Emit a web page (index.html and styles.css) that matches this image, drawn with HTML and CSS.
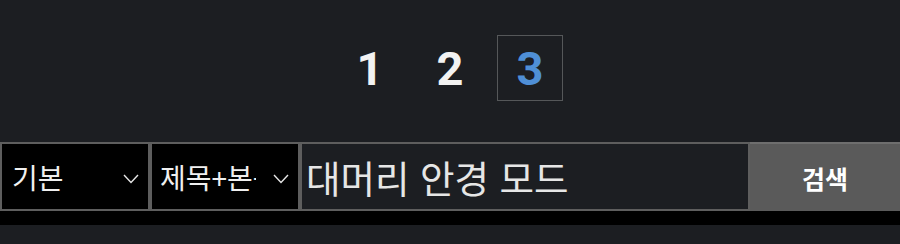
FILE: index.html
```html
<!DOCTYPE html>
<html lang="ko">
<head>
<meta charset="utf-8">
<link rel="stylesheet" href="styles.css">
</head>
<body>
<nav class="pager">
  <a class="page">1</a>
  <a class="page">2</a>
  <a class="page current">3</a>
</nav>
<form class="search">
  <div class="select sel-a">
    <span class="sel-label">기본</span>
    <svg class="chev" viewBox="0 0 16 10"><path d="M1 1 L8 8.5 L15 1" fill="none" stroke="#e6e6e6" stroke-width="1.4"/></svg>
  </div>
  <div class="select sel-b">
    <span class="sel-label">제목+본문</span>
    <svg class="chev" viewBox="0 0 16 10"><path d="M1 1 L8 8.5 L15 1" fill="none" stroke="#e6e6e6" stroke-width="1.4"/></svg>
  </div>
  <div class="query">대머리 안경 모드</div>
  <button class="btn" type="button">검색</button>
</form>
</body>
</html>
```
FILE: styles.css
```css
html, body {
  margin: 0;
  padding: 0;
  background: #1c1e22;
  font-family: "Noto Sans CJK KR", "Noto Sans", sans-serif;
  height: 244px;
  overflow: hidden;
}
.pager {
  display: flex;
  justify-content: center;
  gap: 14px;
  padding-top: 35px;
}
.page {
  box-sizing: border-box;
  width: 66px;
  height: 66px;
  border: 1px solid transparent;
  display: flex;
  align-items: center;
  justify-content: center;
  font-family: Roboto, "Liberation Sans", sans-serif;
  font-weight: 700;
  font-size: 47px;
  color: #f2f2f2;
}
.page.current {
  border-color: #555759;
  color: #4f8fd6;
}
.search {
  margin-top: 41px;
  display: flex;
  background: #000;
  padding-bottom: 14px;
}
.select {
  box-sizing: border-box;
  width: 150px;
  height: 69px;
  border: 2px solid #5e5e5e;
  background: #000;
  display: flex;
  align-items: center;
  color: #f0f0f0;
  font-size: 28px;
  position: relative;
  overflow: hidden;
}
.sel-label {
  padding-left: 10px;
  white-space: nowrap;
  overflow: hidden;
  width: 100px;
  flex: none;
}
.sel-b .sel-label { padding-left: 8px; width: 96px; }
.chev {
  position: absolute;
  right: 9px;
  top: 30px;
  width: 16px;
  height: 10px;
}
.query {
  box-sizing: border-box;
  width: 450px;
  height: 69px;
  border: 2px solid #5e5e5e;
  background: #1c1e22;
  color: #e6e6e6;
  font-size: 37.5px;
  display: flex;
  align-items: center;
  padding-left: 4px;
  white-space: nowrap;
}
.btn {
  box-sizing: border-box;
  width: 150px;
  height: 69px;
  border: none;
  border-top: 2px solid #6e6e6e;
  background: #5a5a5a;
  color: #fff;
  font-family: "Noto Sans CJK KR", sans-serif;
  font-weight: 700;
  font-size: 25px;
  padding: 0;
  margin: 0;
}
```
